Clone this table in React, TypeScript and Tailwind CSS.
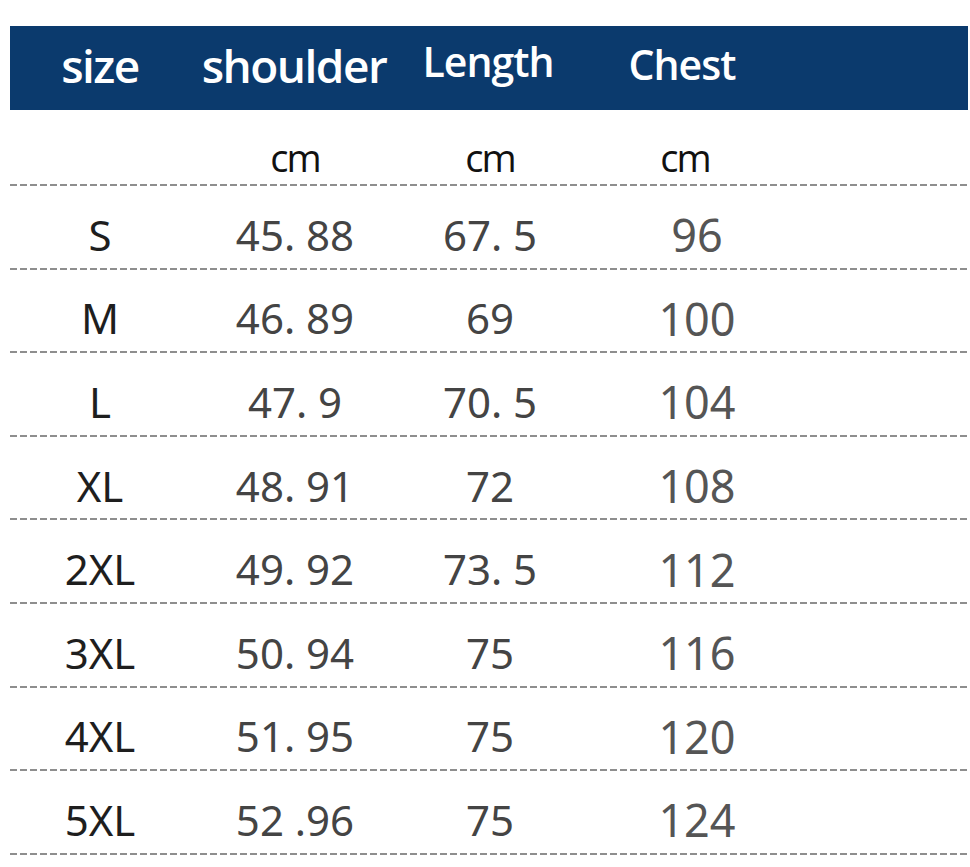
import React from "react";

const rows: [string, string, string, string][] = [
  ["S", "45. 88", "67. 5", "96"],
  ["M", "46. 89", "69", "100"],
  ["L", "47. 9", "70. 5", "104"],
  ["XL", "48. 91", "72", "108"],
  ["2XL", "49. 92", "73. 5", "112"],
  ["3XL", "50. 94", "75", "116"],
  ["4XL", "51. 95", "75", "120"],
  ["5XL", "52 .96", "75", "124"],
];

function Dash() {
  return (
    <div className="ml-[10px] h-[2px] w-[960px] bg-[repeating-linear-gradient(90deg,#8e8e8e_0px,#8e8e8e_7px,transparent_7px,transparent_10px)]" />
  );
}

export default function App() {
  return (
    <div className="w-[970px] h-[867px] bg-white overflow-hidden font-['Open_Sans',sans-serif]">
      <div className="h-[26px]" />
      <div className="ml-[10px] w-[958px] h-[84px] bg-[#0b3a6d] flex items-center text-white">
        <div className="w-[180px] text-center text-[46px] font-semibold tracking-[-1.5px] leading-none pb-[6px]">size</div>
        <div className="w-[208px] text-center text-[46px] font-semibold tracking-[-1.5px] leading-none pb-[6px]">shoulder</div>
        <div className="w-[180px] text-center text-[41px] font-semibold tracking-[-1px] leading-none pb-[14px]">Length</div>
        <div className="w-[208px] text-center text-[41px] font-semibold tracking-[-1px] leading-none pb-[8px]">Chest</div>
      </div>
      <div className="h-[74px] flex items-end pb-[8px] text-[#111] text-[38px] leading-none tracking-[-2px]">
        <div className="w-[190px]" />
        <div className="w-[210px] text-center">cm</div>
        <div className="w-[180px] text-center">cm</div>
        <div className="w-[210px] text-center">cm</div>
      </div>
      <Dash />
      {rows.map((r) => (
        <div key={r[0]}>
          <div className="h-[81.6px] flex items-center pt-[16px] leading-none font-['Noto_Sans',sans-serif]">
            <div className="w-[200px] text-center text-[42px] text-[#1e1e1e]">{r[0]}</div>
            <div className="w-[190px] text-center text-[42px] text-[#444]">{r[1]}</div>
            <div className="w-[200px] text-center text-[42px] text-[#444]">{r[2]}</div>
            <div className="w-[214px] text-center text-[45px] text-[#555]">{r[3]}</div>
          </div>
          <Dash />
        </div>
      ))}
    </div>
  );
}
